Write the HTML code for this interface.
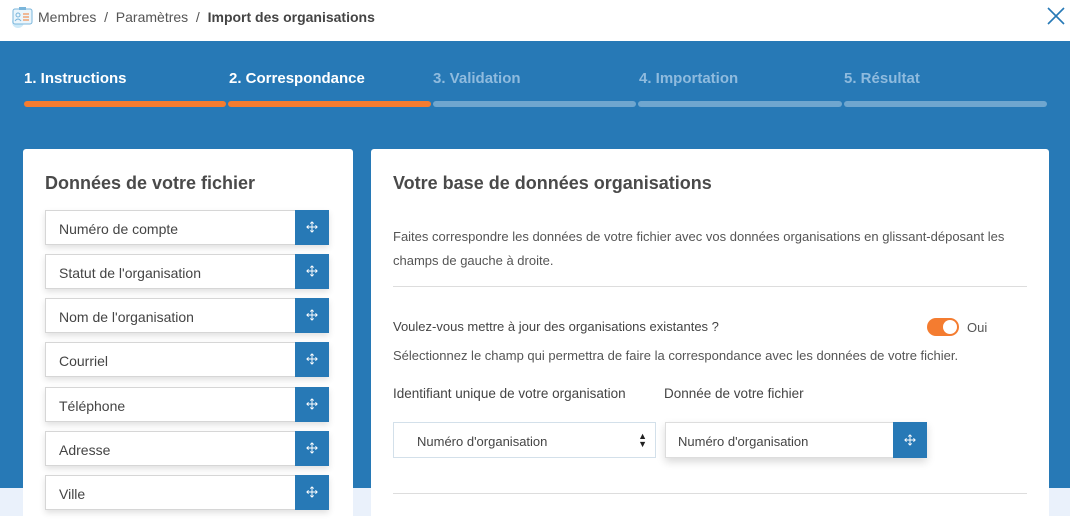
<!DOCTYPE html>
<html><head><meta charset="utf-8"><style>
*{box-sizing:border-box;margin:0;padding:0}
body{width:1070px;height:516px;overflow:hidden;background:#fff;font-family:"Liberation Sans",sans-serif;position:relative}
.a{position:absolute}
.bc{left:38px;top:9px;font-size:14px;color:#555}
.bc b{color:#444}
.blue{left:0;top:41px;width:1070px;height:447px;background:#2779b6}
.light{left:0;top:488px;width:1070px;height:28px;background:#eaf1fb}
.step{top:70px;font-size:15px;font-weight:bold;color:#8fbbde}
.step.on{color:#fff}
.bar{top:101px;height:6px;background:#6fa6cf;border-radius:3px}
.bar.on{background:#f47c30}
.panel{background:#fff;border-radius:3px}
.h{font-size:18px;color:#4a4a4a;font-weight:bold}
.item{left:45px;width:284px;height:35px;background:#fff;border:1px solid #d6d6d6;box-shadow:0 3px 6px rgba(0,0,0,.12);font-size:14px;color:#444;padding:10px 0 0 13px}
.hd{position:absolute;right:-1px;top:-1px;width:34px;height:35px;background:#2779b6}
.hd svg{position:absolute;left:11px;top:11px}
.t{font-size:13px;color:#555}
.line{height:1px;background:#ddd}
</style></head><body>
<svg class="a" style="left:10px;top:5px" width="24" height="24" viewBox="0 0 24 24"><circle cx="8" cy="17" r="6" fill="#cde9f8"/><rect x="3" y="4" width="19" height="15" rx="2" fill="#eaf5fc" stroke="#7bb6db"/><rect x="9" y="2" width="7" height="3" fill="#7bb6db"/><circle cx="8" cy="10" r="2" fill="none" stroke="#7bb6db"/><path d="M5 16q3-4 6 0" fill="none" stroke="#7bb6db"/><path d="M13 9h6M13 12h6M13 15h6" stroke="#f47c30"/></svg>
<div class="a bc">Membres &nbsp;/&nbsp; Paramètres &nbsp;/&nbsp; <b>Import des organisations</b></div>
<svg class="a" style="left:1047px;top:7px" width="18" height="18" viewBox="0 0 18 18"><path d="M1 1L17 17M17 1L1 17" stroke="#2779b6" stroke-width="1.6"/></svg>
<div class="a blue"></div><div class="a light"></div>
<div class="a step on" style="left:24px">1. Instructions</div>
<div class="a step on" style="left:229px">2. Correspondance</div>
<div class="a step" style="left:433px">3. Validation</div>
<div class="a step" style="left:639px">4. Importation</div>
<div class="a step" style="left:844px">5. Résultat</div>
<div class="a bar on" style="left:24px;width:202px"></div>
<div class="a bar on" style="left:228px;width:203px"></div>
<div class="a bar" style="left:433px;width:203px"></div>
<div class="a bar" style="left:638px;width:204px"></div>
<div class="a bar" style="left:844px;width:203px"></div>
<div class="a panel" style="left:23px;top:149px;width:330px;height:380px"></div>
<div class="a h" style="left:45px;top:173px">Données de votre fichier</div>
<div class="a item" style="top:210px">Numéro de compte<div class="hd"><svg width="12" height="12" viewBox="0 0 14 14"><path d="M7 1v12M1 7h12M5 3l2-2 2 2M5 11l2 2 2-2M3 5L1 7l2 2M11 5l2 2-2 2" fill="none" stroke="#fff" stroke-width="1.1"/></svg></div></div>
<div class="a item" style="top:254px">Statut de l'organisation<div class="hd"><svg width="12" height="12" viewBox="0 0 14 14"><path d="M7 1v12M1 7h12M5 3l2-2 2 2M5 11l2 2 2-2M3 5L1 7l2 2M11 5l2 2-2 2" fill="none" stroke="#fff" stroke-width="1.1"/></svg></div></div>
<div class="a item" style="top:298px">Nom de l'organisation<div class="hd"><svg width="12" height="12" viewBox="0 0 14 14"><path d="M7 1v12M1 7h12M5 3l2-2 2 2M5 11l2 2 2-2M3 5L1 7l2 2M11 5l2 2-2 2" fill="none" stroke="#fff" stroke-width="1.1"/></svg></div></div>
<div class="a item" style="top:342px">Courriel<div class="hd"><svg width="12" height="12" viewBox="0 0 14 14"><path d="M7 1v12M1 7h12M5 3l2-2 2 2M5 11l2 2 2-2M3 5L1 7l2 2M11 5l2 2-2 2" fill="none" stroke="#fff" stroke-width="1.1"/></svg></div></div>
<div class="a item" style="top:387px">Téléphone<div class="hd"><svg width="12" height="12" viewBox="0 0 14 14"><path d="M7 1v12M1 7h12M5 3l2-2 2 2M5 11l2 2 2-2M3 5L1 7l2 2M11 5l2 2-2 2" fill="none" stroke="#fff" stroke-width="1.1"/></svg></div></div>
<div class="a item" style="top:431px">Adresse<div class="hd"><svg width="12" height="12" viewBox="0 0 14 14"><path d="M7 1v12M1 7h12M5 3l2-2 2 2M5 11l2 2 2-2M3 5L1 7l2 2M11 5l2 2-2 2" fill="none" stroke="#fff" stroke-width="1.1"/></svg></div></div>
<div class="a item" style="top:475px">Ville<div class="hd"><svg width="12" height="12" viewBox="0 0 14 14"><path d="M7 1v12M1 7h12M5 3l2-2 2 2M5 11l2 2 2-2M3 5L1 7l2 2M11 5l2 2-2 2" fill="none" stroke="#fff" stroke-width="1.1"/></svg></div></div>
<div class="a panel" style="left:371px;top:149px;width:678px;height:380px"></div>
<div class="a h" style="left:393px;top:173px">Votre base de données organisations</div>
<div class="a t" style="left:393px;top:225px;width:650px;line-height:24px">Faites correspondre les données de votre fichier avec vos données organisations en glissant-déposant les champs de gauche à droite.</div>
<div class="a line" style="left:393px;top:286px;width:634px"></div>
<div class="a t" style="left:393px;top:319px;color:#444">Voulez-vous mettre à jour des organisations existantes ?</div>
<div class="a" style="left:927px;top:318px;width:32px;height:18px;border-radius:9px;background:#f47c30"><div class="a" style="right:2px;top:2px;width:14px;height:14px;border-radius:7px;background:#fff"></div></div>
<div class="a t" style="left:967px;top:320px">Oui</div>
<div class="a t" style="left:393px;top:348px">Sélectionnez le champ qui permettra de faire la correspondance avec les données de votre fichier.</div>
<div class="a t" style="left:393px;top:386px;color:#444;font-size:13.5px">Identifiant unique de votre organisation</div>
<div class="a t" style="left:664px;top:386px;color:#444;font-size:13.5px">Donnée de votre fichier</div>
<div class="a t" style="left:393px;top:422px;width:263px;height:36px;border:1px solid #d3e0ea;padding:11px 0 0 23px;color:#444">Numéro d'organisation<span class="a" style="right:8px;top:9px;font-size:9px;line-height:8px;color:#222">▲<br>▼</span></div>
<div class="a t" style="left:665px;top:422px;width:262px;height:36px;border:1px solid #ddd;box-shadow:0 4px 8px rgba(0,0,0,.15);padding:11px 0 0 12px;color:#444">Numéro d'organisation<div class="a" style="right:-1px;top:-1px;width:34px;height:36px;background:#2779b6"><svg class="a" style="left:11px;top:12px" width="12" height="12" viewBox="0 0 14 14"><path d="M7 1v12M1 7h12M5 3l2-2 2 2M5 11l2 2 2-2M3 5L1 7l2 2M11 5l2 2-2 2" fill="none" stroke="#fff" stroke-width="1.1"/></svg></div></div>
<div class="a line" style="left:393px;top:493px;width:634px"></div>
</body></html>
